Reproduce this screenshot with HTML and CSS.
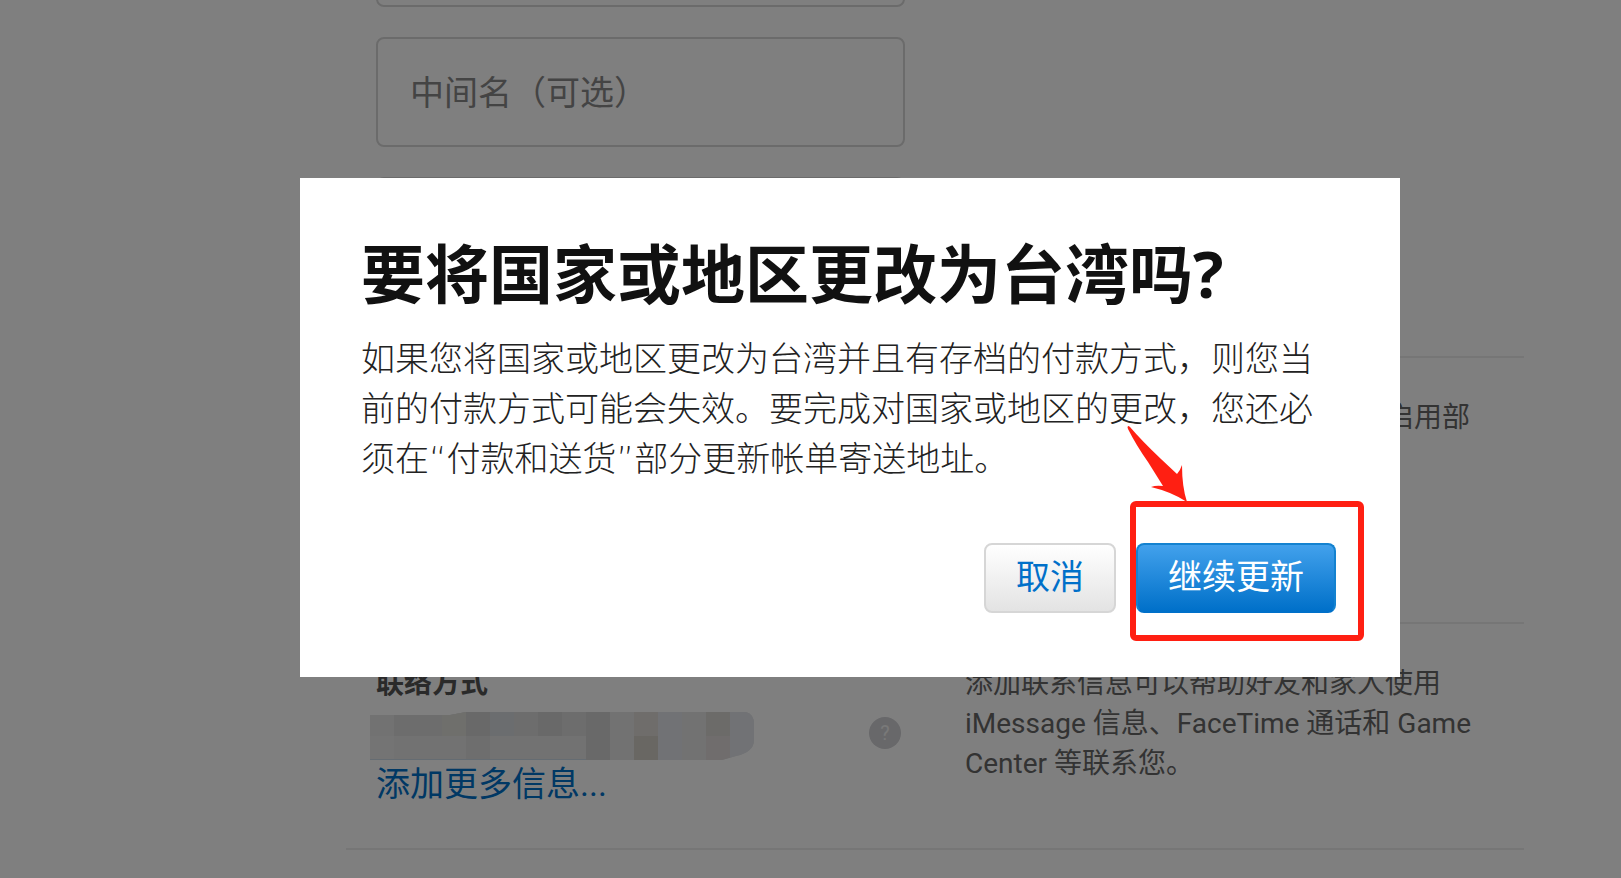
FILE: index.html
```html
<!DOCTYPE html>
<html lang="zh-CN">

<head>
    <meta charset="UTF-8">
    <meta name="viewport" content="width=device-width, initial-scale=1.0">
    <title>更改国家或地区</title>
    <link rel="stylesheet" href="styles.css">
</head>

<body>
    <main class="account">
        <section class="section names">
            <div class="fields">
                <input type="text" class="field" aria-label="姓名">
                <input type="text" class="field" aria-label="中间名" placeholder="中间名（可选）">
                <input type="text" class="field" aria-label="名字">
            </div>
        </section>

        <section class="section birthday">
            <p class="hint hint-end">启用部</p>
        </section>

        <section class="section contact">
            <div>
                <h2 class="section-title">联络方式</h2>
                <div class="contact-row">
                    <!-- 已打码的联系方式 -->
                    <svg class="mosaic" viewBox="0 0 384 48" aria-hidden="true">
                        <defs>
                            <clipPath id="mosaicShape">
                                <path d="M0 3L80 3L96 0H376Q384 2 384 12V28Q384 40 366 44L352 48H216V49H96L80 51H0Z" />
                            </clipPath>
                        </defs>
                        <g clip-path="url(#mosaicShape)">
                            <path fill="#e4e4e4" d="M0 0H384V48H0Z" />
                            <path fill="#dadada" d="M24 0H96V24H24ZM120 0H216V24H120Z" />
                            <path fill="#d2d2d2" d="M96 0H120V24H96ZM168 0H192V24H168ZM216 0H240V48H216Z" />
                            <path fill="#d6dade" d="M120 0H144V24H120Z" />
                            <path fill="#deded9" d="M72 0H96V24H72Z" />
                            <path fill="#e9e9e9" d="M0 24H24V48H0Z" />
                            <path fill="#dddddd" d="M96 24H120V48H96Z" />
                            <path fill="#dfdbd6" d="M264 0H288V24H264Z" />
                            <path fill="#d2cec6" d="M264 24H288V48H264Z" />
                            <path fill="#e2e5eb" d="M288 0H312V48H288ZM360 0H384V48H360Z" />
                            <path fill="#d8d6d3" d="M336 0H360V24H336Z" />
                            <path fill="#e0dadb" d="M336 24H360V48H336Z" />
                        </g>
                        <path fill="#cbd8e4" d="M0 47H216V48H0Z" />
                    </svg>
                    <button type="button" class="help" aria-label="帮助">?</button>
                </div>
                <a href="#" class="link">添加更多信息...</a>
            </div>
            <p class="hint">添加联系信息可以帮助好友和家人使用 iMessage 信息、FaceTime 通话和 Game Center 等联系您。</p>
        </section>
    </main>

    <div class="overlay">
        <div class="dialog" role="dialog" aria-modal="true" aria-labelledby="dialogTitle">
            <h1 class="dialog-title" id="dialogTitle">要将国家或地区更改为台湾吗?</h1>
            <p class="dialog-text">如果您将国家或地区更改为台湾并且有存档的付款方式，则您当前的付款方式可能会失效。要完成对国家或地区的更改，您还必须在“付款和送货”部分更新帐单寄送地址。</p>
            <div class="actions">
                <button type="button" class="button">取消</button>
                <div class="marked">
                    <button type="button" class="button button-primary">继续更新</button>
                    <span class="mark"></span>
                    <svg class="arrow" viewBox="0 0 64 78" aria-hidden="true">
                        <path fill="#ff1f12" d="M2 1Q3 1 4 2Q16 16 35 34L51 49Q54 46 56 40Q56 62 61 77Q46 67 25 62Q30 60 37 61L22 37Q10 20 2 4Q1 2 2 1Z" />
                    </svg>
                </div>
            </div>
        </div>
    </div>
</body>

</html>
```

FILE: styles.css
```css
* {
    box-sizing: border-box;
}

body {
    margin: 0;
    height: 100vh;
    overflow: hidden;
    background-color: white;
    color: #666;
    font-family: Roboto, "Noto Sans CJK SC", sans-serif;
    font-size: 28px;
    line-height: 40px;
}

h1,
h2,
p {
    margin: 0;
}

/* page is scrolled down to the contact section */
.account {
    margin: -103px 97px 0 346px;
}

.section {
    display: grid;
    grid-template-columns: 1fr 1fr;
    column-gap: 60px;
    padding: 40px 30px;
    border-bottom: 2px solid #ececec;
}

.names {
    padding-top: 0;
    padding-bottom: 69px;
}

.fields {
    display: flex;
    flex-direction: column;
    gap: 30px;
}

.field {
    width: 100%;
    height: 110px;
    padding: 2px 32px 0;
    border: 2px solid #d6d6d6;
    border-radius: 8px;
    background-color: white;
    font-family: inherit;
    font-size: 34px;
}

.field::placeholder {
    color: #888;
    opacity: 1;
}

.birthday {
    min-height: 266px;
}

.hint-end {
    grid-column: 2;
    padding-right: 24px;
    text-align: right;
}

.section-title {
    color: #555;
    font-size: 28px;
    font-weight: bold;
}

.contact-row {
    display: flex;
    justify-content: space-between;
    align-items: flex-start;
    margin: 8px 4px 0 -6px;
}

.mosaic {
    width: 384px;
    height: 48px;
}

.help {
    width: 32px;
    height: 32px;
    margin-top: 5px;
    padding: 0;
    border: none;
    border-radius: 50%;
    background-color: #d0d0d4;
    color: #f2f2f2;
    font-family: inherit;
    font-size: 20px;
    line-height: 32px;
}

.link {
    display: block;
    color: #0070c9;
    font-size: 34px;
    line-height: 48px;
    text-decoration: none;
}

.overlay {
    position: fixed;
    inset: 0;
    padding: 178px 221px 0 300px;
    background-color: rgba(0, 0, 0, 0.5);
}

.dialog {
    padding: 56px 64px 64px 61px;
    background-color: white;
    font-family: "Open Sans", "Noto Sans CJK SC", sans-serif;
}

.dialog-title {
    color: #111;
    font-size: 64px;
    font-weight: bold;
    line-height: 80px;
}

.dialog-text {
    margin-top: 20px;
    color: #222;
    /* wider curly quotes between the Chinese glyphs */
    font-family: "DejaVu Sans", "Noto Sans CJK SC", sans-serif;
    font-size: 34px;
    font-weight: 300;
    line-height: 50px;
}

.actions {
    display: flex;
    justify-content: flex-end;
    gap: 20px;
    margin-top: 59px;
}

.button {
    height: 70px;
    padding: 0 30px 4px;
    border: 2px solid #d6d6d6;
    border-radius: 8px;
    background: linear-gradient(white, #e3e3e3);
    color: #0070c9;
    font-family: inherit;
    font-size: 34px;
    line-height: 62px;
    cursor: pointer;
}

.button-primary {
    border-color: #1482d0;
    border-bottom-color: #0070c9;
    background: linear-gradient(#42a1ec, #0070c9);
    color: white;
}

.marked {
    position: relative;
    display: flex;
}

.mark {
    position: absolute;
    inset: -42px -28px -28px -6px;
    border: 6px solid #ff1f12;
    border-radius: 6px;
    pointer-events: none;
}

.arrow {
    position: absolute;
    top: -118px;
    left: -10px;
    width: 64px;
    height: 78px;
}
```
